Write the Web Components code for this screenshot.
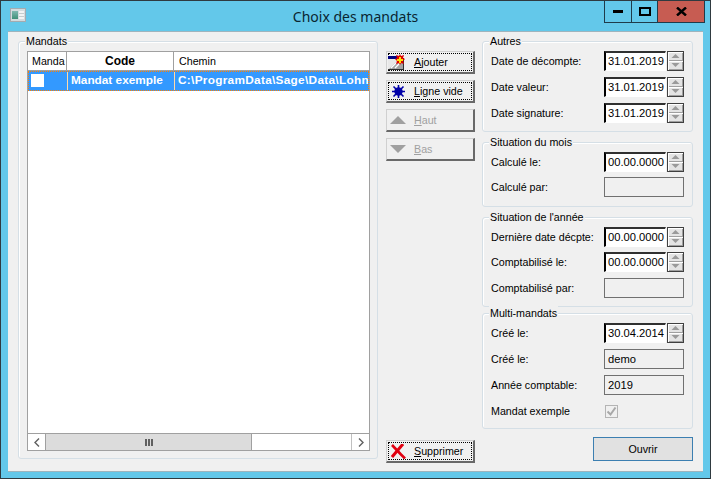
<!DOCTYPE html>
<html>
<head>
<meta charset="utf-8">
<title>Choix des mandats</title>
<style>
  html, body { margin: 0; padding: 0; width: 711px; height: 479px; overflow: hidden; }
  body { font: 10.7px "Liberation Sans", Arial, sans-serif; color: #000; }
</style>
</head>
<body>
<app-window>
  <group-box slot="left" label="Mandats" style="--h: 418px; --w: 360px; --pad: 9px 7px 7px 8px">
    <mandate-grid></mandate-grid>
  </group-box>
  <tool-button slot="middle" label="Ajouter" key="A" icon="add" focus></tool-button>
  <tool-button slot="middle" label="Ligne vide" key="L" icon="star" focus></tool-button>
  <tool-button slot="middle" label="Haut" key="H" icon="up" disabled></tool-button>
  <tool-button slot="middle" label="Bas" key="B" icon="down" disabled></tool-button>
  <tool-button slot="bottom" label="Supprimer" key="S" icon="del" focus></tool-button>

  <group-box slot="right" label="Autres" style="--h: 91px; --mb: 10px">
    <field-row label="Date de décompte:" date="31.01.2019"></field-row>
    <field-row label="Date valeur:" date="31.01.2019"></field-row>
    <field-row label="Date signature:" date="31.01.2019"></field-row>
  </group-box>
  <group-box slot="right" label="Situation du mois" style="--h: 65px; --mb: 10px">
    <field-row label="Calculé le:" date="00.00.0000" style="margin-bottom: -1px"></field-row>
    <field-row label="Calculé par:" text=""></field-row>
  </group-box>
  <group-box slot="right" label="Situation de l'année" style="--h: 90px; --mb: 6px">
    <field-row label="Dernière date décpte:" date="00.00.0000" style="margin-bottom: -1px"></field-row>
    <field-row label="Comptabilisé le:" date="00.00.0000"></field-row>
    <field-row label="Comptabilisé par:" text=""></field-row>
  </group-box>
  <group-box slot="right" label="Multi-mandats" style="--h: 116px; --mb: 8px">
    <field-row label="Créé le:" date="30.04.2014"></field-row>
    <field-row label="Créé le:" text="demo"></field-row>
    <field-row label="Année comptable:" text="2019"></field-row>
    <field-row label="Mandat exemple" check></field-row>
  </group-box>
  <main-button slot="right">Ouvrir</main-button>
</app-window>

<script>
const ICONS = {
  add: `<svg style="margin-left:-1px" width="17" height="16" viewBox="0 0 17 16"><rect x="0" y="2" width="15" height="13" fill="#e8e8e8"/><rect x="14" y="4" width="2" height="12" fill="#303030"/><rect x="0" y="15" width="16" height="1" fill="#303030"/><rect x="0" y="2" width="12" height="3" fill="#000080"/><path d="M1 15 10 6h5v9z" fill="#a4a4a4"/><path d="M3 14 9 8M7 14l5-5" stroke="#fff" stroke-width="1.3"/><path d="M12 0l1 2 3-1-1 3 2 1-2 2 1 3-3-1-1 2-1-2-3 1 1-3-2-2 2-1-1-3 3 1z" fill="#e00000"/><path d="M11 3h2v2h2v2h-2v2h-2V7H9V5h2z" fill="#ffe000"/></svg>`,
  star: `<svg style="margin-left:3px" width="13" height="13" viewBox="0 0 13 13"><path d="M6.5 0v13M0 6.5h13M1.5 1.5l10 10M11.5 1.5l-10 10" stroke="#0000a8" stroke-width="1.6"/><circle cx="6.5" cy="6.5" r="4.2" fill="#0000a8"/></svg>`,
  up: `<svg style="margin-left:1px" width="16" height="8" viewBox="0 0 16 8"><path d="M8 0l8 8H0z" fill="#a0a0a0"/></svg>`,
  down: `<svg style="margin-left:1px" width="16" height="8" viewBox="0 0 16 8"><path d="M0 0h16L8 8z" fill="#a0a0a0"/></svg>`,
  del: `<svg style="margin-left:2px" width="15" height="15" viewBox="0 0 15 15"><path d="M1 1l9 9.500 4 4" fill="none" stroke="#e00010" stroke-width="2.600"/><path d="M12 0 1 13" stroke="#e00010" stroke-width="3"/></svg>`
};

const icon = `<svg width="16" height="14" viewBox="0 0 16 14"><defs><linearGradient id="g" x1="0" y1="0" x2="0" y2="1"><stop offset="0" stop-color="#7fb8b0"/><stop offset="1" stop-color="#3f9078"/></linearGradient></defs><rect x=".5" y=".5" width="15" height="13" fill="#d4dbde" stroke="#a4abb0"/><rect x="2" y="3" width="6" height="8" fill="url(#g)"/><rect x="9" y="3" width="5" height="8" fill="#f2f4f4"/><path d="M9 5.500h5M9 8.500h5" stroke="#c4ccce"/></svg>`;

class AppWindow extends HTMLElement {
  constructor() {
    super();
    const shadow = this.attachShadow({ mode: 'open' });
    shadow.innerHTML = `
      <style>
        :host { display: flex; flex-direction: column; box-sizing: border-box; width: 711px; height: 479px;
          background: #63c8ea; border: 1px solid #2f3a40; padding: 0 7px 6px; }
        .bar { height: 30px; display: flex; align-items: flex-start; flex: none; }
        .ico { margin: 7px 0 0 2px; width: 16px; }
        .title { flex: 1; text-align: center; font: 14px/31px "Noto Sans", sans-serif; color: #0a2530; padding-left: 81px; }
        .ctl { display: flex; height: 21px; border: 1px solid #1f3b4a; border-top: 0; margin-right: -2px; }
        .ctl div { display: flex; align-items: center; justify-content: center; height: 21px; }
        .ctl .min { width: 26px; border-right: 1px solid #1f3b4a; }
        .ctl .max { width: 25px; border-right: 1px solid #1f3b4a; }
        .ctl .cls { width: 46px; background: #c75c52; }
        .client { flex: 1; display: flex; background: #f0f0f0; padding: 9px 10px 0; min-height: 0; border: solid #9fb4bd; border-width: 1px 0; }
        .mid { width: 89px; margin: 10px 7px 8px 8px; display: flex; flex-direction: column; gap: 6px; }
        .mid .sp { flex: 1; }
        .right { width: 211px; display: flex; flex-direction: column; }
      </style>
      <div class="bar">
        <div class="ico">${icon}</div>
        <div class="title">Choix des mandats</div>
        <div class="ctl">
          <div class="min"><svg width="10" height="3"><rect width="10" height="3" fill="#000"/></svg></div>
          <div class="max"><svg width="12" height="9"><rect x="1" y="1" width="10" height="7" fill="none" stroke="#000" stroke-width="2"/></svg></div>
          <div class="cls"><svg width="11" height="9"><path d="M1 .5l9 8M10 .5l-9 8" stroke="#000" stroke-width="2.4"/></svg></div>
        </div>
      </div>
      <div class="client">
        <div><slot name="left"></slot></div>
        <div class="mid"><slot name="middle"></slot><div class="sp"></div><slot name="bottom"></slot></div>
        <div class="right"><slot name="right"></slot></div>
      </div>`;
  }
}

class GroupBox extends HTMLElement {
  constructor() {
    super();
    const shadow = this.attachShadow({ mode: 'open' });
    shadow.innerHTML = `
      <style>
        :host { display: block; box-sizing: border-box; position: relative; height: var(--h); width: var(--w, 211px);
          margin-bottom: var(--mb, 0); border: 1px solid #d5dfe6; border-radius: 3px; box-shadow: inset 1px 1px 0 #fff;
          padding: var(--pad, 9px 8px 0 8px); }
        .legend { position: absolute; left: 6px; top: -8px; background: #f0f0f0; padding: 0 1px; line-height: 15px; white-space: nowrap; }
        .body { display: flex; flex-direction: column; gap: 6px; height: 100%; }
      </style>
      <div class="legend"></div>
      <div class="body"><slot></slot></div>`;
    shadow.querySelector('.legend').textContent = this.getAttribute('label');
  }
}

class FieldRow extends HTMLElement {
  constructor() {
    super();
    const shadow = this.attachShadow({ mode: 'open' });
    const date = this.getAttribute('date');
    const text = this.getAttribute('text');
    let control = '';
    if (date !== null) {
      control = `<div class="date">${date}</div>
        <div class="spin"><div><svg width="9" height="5"><path d="M4.5 0l4 4H.5z" fill="#9a9a9a"/></svg></div><div><svg width="9" height="5"><path d="M.5 0h8l-4 4z" fill="#9a9a9a"/></svg></div></div>`;
    } else if (text !== null) {
      control = `<div class="ro">${text}</div>`;
    } else {
      control = `<div class="chk"><svg width="11" height="11" viewBox="0 0 11 11"><path d="M1.500 5.500l3 3 5-7" fill="none" stroke="#a8a8a8" stroke-width="2"/></svg></div>`;
    }
    shadow.innerHTML = `
      <style>
        :host { display: flex; align-items: center; height: 20px; }
        .lab { width: 113px; flex: none; white-space: nowrap; }
        .date { box-sizing: border-box; width: 63px; height: 20px; background: #fff; border: solid; border-width: 2px 1px 1px 2px;
          border-color: #303030 #fff #fff #000; padding-left: 2px; line-height: 17px; font-size: 11.200px; white-space: nowrap; }
        .spin { margin-left: 1px; width: 17px; height: 20px; box-sizing: border-box; border: 1px solid #404040; display: flex; flex-direction: column; }
        .spin div { flex: 1; display: flex; align-items: center; justify-content: center; background: #e4e4e4; box-shadow: inset 1px 1px 0 #fff, inset -1px -1px 0 #a0a0a0; }
        .ro { box-sizing: border-box; width: 81px; height: 20px; background: #f0f0f0; border: 1px solid #707070; padding-left: 3px; line-height: 18px; font-size: 11.200px; }
        .chk { box-sizing: border-box; width: 13px; height: 13px; border: 1px solid #b4b4b4; display: flex; align-items: center; justify-content: center; margin: 1px 0 0 1px; }
      </style>
      <div class="lab"></div>${control}`;
    shadow.querySelector('.lab').textContent = this.getAttribute('label');
  }
}

class ToolButton extends HTMLElement {
  constructor() {
    super();
    const shadow = this.attachShadow({ mode: 'open' });
    const label = this.getAttribute('label');
    const key = this.getAttribute('key');
    const off = this.hasAttribute('disabled');
    shadow.innerHTML = `
      <style>
        :host { display: block; box-sizing: border-box; height: 23px; width: 89px; background: #f0f0f0;
          border: solid; border-width: 1px 2px 2px 1px; border-color: #d0d0d0 #696969 #696969 #d0d0d0; padding: 1px; }
        .in { box-sizing: border-box; height: 100%; display: flex; align-items: center; border: 1px dotted ${this.hasAttribute('focus') ? '#000' : 'transparent'}; }
        .ic { width: 23px; margin-left: 0; display: flex; flex: none; }
        .tx { margin-left: 2px; color: ${off ? '#a0a0a0' : '#000'}; white-space: nowrap; }
        u { text-underline-offset: 1px; }
      </style>
      <div class="in"><div class="ic">${ICONS[this.getAttribute('icon')]}</div><div class="tx"><u>${key}</u>${label.slice(1)}</div></div>`;
  }
}

class MainButton extends HTMLElement {
  constructor() {
    super();
    const shadow = this.attachShadow({ mode: 'open' });
    shadow.innerHTML = `
      <style>
        :host { display: flex; align-items: center; justify-content: center; box-sizing: border-box; width: 100px; height: 24px;
          align-self: flex-end; background: #e1e1e1; border: 1px solid #3c7fb1; }
      </style>
      <slot></slot>`;
  }
}

class MandateGrid extends HTMLElement {
  constructor() {
    super();
    const shadow = this.attachShadow({ mode: 'open' });
    shadow.innerHTML = `
      <style>
        :host { display: flex; flex-direction: column; box-sizing: border-box; width: 343px; height: 400px; background: #fff; border: 1px solid #a0a0a0; }
        .head, .row { display: grid; grid-template-columns: 39px 107px 1fr; }
        .head { height: 18px; border-bottom: 1px solid #a0a0a0; line-height: 19px; flex: none; }
        .head div { padding-left: 5px; white-space: nowrap; overflow: hidden; border-right: 1px solid #a0a0a0; }
        .head div:first-child { padding-left: 4px; }
        .head div:last-child { border-right: 0; }
        .head .code { font: bold 12px/19px "Liberation Sans", sans-serif; text-align: center; padding: 0; }
        .row { box-sizing: border-box; height: 20px; background: #3399ff; color: #fff; font: bold 11.800px/17px "Liberation Sans", sans-serif; border: 1px dotted #ff8000; flex: none; }
        .row div { white-space: nowrap; overflow: hidden; padding-left: 3px; border-right: 1px solid #ffd9a8; }
        .row div:last-child { border-right: 0; letter-spacing: .3px; padding-left: 3px; }
        .row .box { padding: 2px 0 0 2px; }
        .row .box span { display: block; width: 13px; height: 13px; background: #fff; }
        .fill { flex: 1; }
        .scroll { height: 16px; display: flex; border-top: 1px solid #a0a0a0; flex: none; }
        .btn { width: 17px; display: flex; align-items: center; justify-content: center; flex: none; }
        .thumb { width: 205px; background: #dcdcdc; border: solid #a0a0a0; border-width: 0 1px 0 1px; display: flex; align-items: center; justify-content: center; gap: 1px; }
        .thumb i { width: 2px; height: 7px; background: #606060; }
        .track { flex: 1; border-right: 1px solid #c0c0c0; }
      </style>
      <div class="head"><div>Manda</div><div class="code">Code</div><div>Chemin</div></div>
      <div class="row"><div class="box"><span></span></div><div>Mandat exemple</div><div>C:\\ProgramData\\Sage\\Data\\Lohn</div></div>
      <div class="fill"></div>
      <div class="scroll">
        <div class="btn"><svg width="6" height="9"><path d="M5 .5l-4 4 4 4" fill="none" stroke="#606060" stroke-width="1.4"/></svg></div>
        <div class="thumb"><i></i><i></i><i></i></div>
        <div class="track"></div>
        <div class="btn"><svg width="6" height="9"><path d="M1 .5l4 4-4 4" fill="none" stroke="#606060" stroke-width="1.4"/></svg></div>
      </div>`;
  }
}

customElements.define('app-window', AppWindow);
customElements.define('group-box', GroupBox);
customElements.define('field-row', FieldRow);
customElements.define('tool-button', ToolButton);
customElements.define('main-button', MainButton);
customElements.define('mandate-grid', MandateGrid);
</script>
</body>
</html>
